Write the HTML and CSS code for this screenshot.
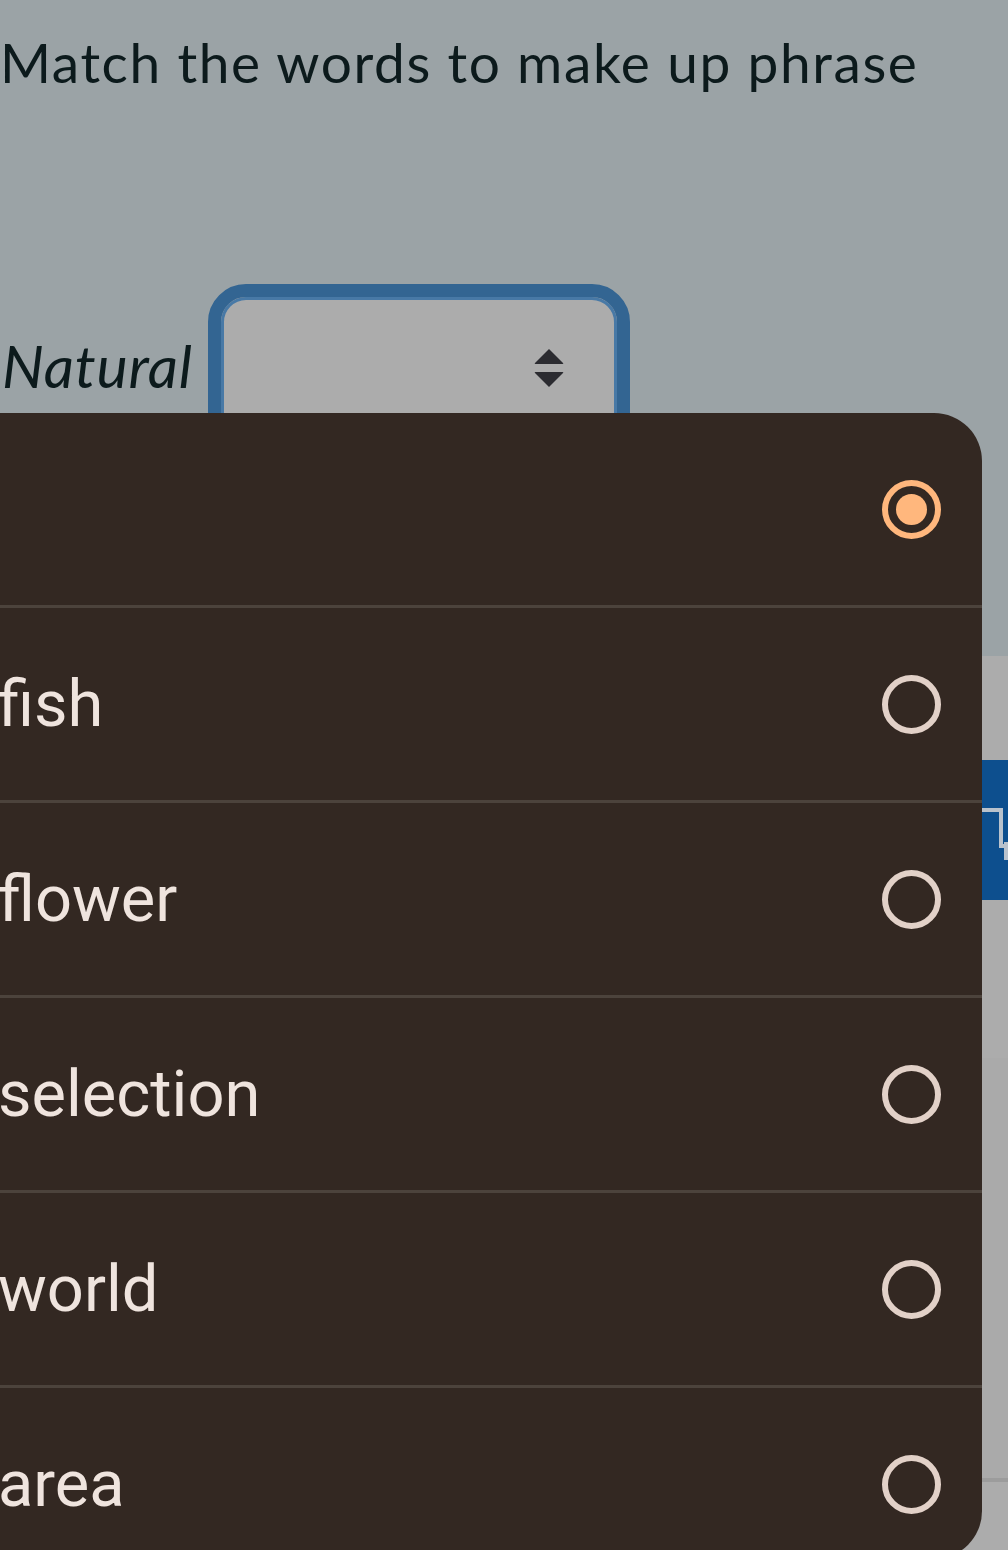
FILE: index.html
```html
<!DOCTYPE html>
<html>
<head>
<meta charset="utf-8">
<link rel="stylesheet" href="styles.css">
</head>
<body>
<main class="page">
  <h1 class="title">Match the words to make up phrase</h1>
  <div class="field">
    <span class="label">Natural</span>
    <div class="select">
      <svg class="updown" width="34" height="42" viewBox="0 0 34 42">
        <path d="M17 2 L31 16 Q32 17 30.5 17 L3.5 17 Q2 17 3 16 Z" fill="#2b2b30"/>
        <path d="M17 40 L31 26 Q32 25 30.5 25 L3.5 25 Q2 25 3 26 Z" fill="#2b2b30"/>
      </svg>
    </div>
  </div>
  <section class="sheet">
    <div class="sheet-top"></div>
    <div class="band">
      <svg class="copy" width="30" height="56" viewBox="0 0 30 56">
        <path d="M0 6 H19 V42 H26" fill="none" stroke="#b9c2cc" stroke-width="4"/>
        <path d="M24 38 V56" fill="none" stroke="#b9c2cc" stroke-width="4"/>
      </svg>
    </div>
    <div class="sheet-mid"></div>
    <div class="sheet-low"></div>
    <div class="sheet-foot"></div>
  </section>
</main>

<div class="menu">
  <div class="opt">
    <span class="opt-text"></span>
    <span class="radio on"><span class="dot"></span></span>
  </div>
  <div class="opt">
    <span class="opt-text">fish</span>
    <span class="radio"></span>
  </div>
  <div class="opt">
    <span class="opt-text">flower</span>
    <span class="radio"></span>
  </div>
  <div class="opt">
    <span class="opt-text">selection</span>
    <span class="radio"></span>
  </div>
  <div class="opt">
    <span class="opt-text">world</span>
    <span class="radio"></span>
  </div>
  <div class="opt">
    <span class="opt-text">area</span>
    <span class="radio"></span>
  </div>
</div>
</body>
</html>
```
FILE: styles.css
```css
html, body {
  margin: 0;
  padding: 0;
  height: 1550px;
  overflow: hidden;
  background: #9ba3a6;
}

.page {
  position: relative;
  height: 1550px;
}

.title {
  margin: 0;
  padding-top: 30px;
  font-family: Lato, "Noto Sans", sans-serif;
  font-weight: 400;
  font-size: 55px;
  line-height: 64px;
  color: #0c1a1c;
  letter-spacing: 1.6px;
}

.field {
  display: flex;
  align-items: flex-start;
  gap: 15px;
  margin-top: 190px;
}

.label {
  font-family: Lato, "Noto Sans", sans-serif;
  font-style: italic;
  font-size: 59px;
  line-height: 64px;
  color: #0c1a1c;
  padding-top: 50px;
  padding-left: 2px;
  letter-spacing: 0.8px;
}

.select {
  box-sizing: border-box;
  width: 422px;
  height: 170px;
  border: 13px solid #336592;
  border-radius: 38px;
  background: #acacac;
  box-shadow: inset 0 0 0 3px #4879a6;
  display: flex;
  justify-content: flex-end;
  align-items: flex-start;
  padding: 50px 51px 0 0;
}

.sheet {
  margin-top: 202px;
  display: flex;
  flex-direction: column;
}

.sheet-top {
  height: 104px;
  background: #acacac;
}

.band {
  height: 140px;
  background: #0d4f8e;
  display: flex;
  justify-content: flex-end;
  align-items: flex-start;
  padding-top: 44px;
  box-sizing: border-box;
}

.copy {
  margin-right: -4px;
}

.sheet-mid {
  height: 158px;
  background: #acacac;
}

.sheet-low {
  height: 420px;
  background: #aaaaaa;
  border-bottom: 4px solid #9c9c9c;
}

.sheet-foot {
  height: 80px;
  background: #acacac;
}

.menu {
  position: absolute;
  left: -60px;
  top: 413px;
  width: 1042px;
  height: 1146px;
  background: #332822;
  border-radius: 48px;
  overflow: hidden;
  display: flex;
  flex-direction: column;
}

.opt {
  height: 192px;
  flex: none;
  display: flex;
  align-items: center;
  justify-content: space-between;
  padding: 0 41px 0 58px;
  border-top: 3px solid #4c433c;
}

.opt:first-child {
  border-top: none;
}

.opt-text {
  font-family: Roboto, "Noto Sans", sans-serif;
  font-size: 65px;
  color: #efe4de;
  letter-spacing: 0;
}

.radio {
  box-sizing: border-box;
  width: 59px;
  height: 59px;
  border-radius: 50%;
  border: 6px solid #e2d1c8;
  display: flex;
  align-items: center;
  justify-content: center;
}

.radio.on {
  border-color: #ffb77d;
}

.dot {
  width: 31px;
  height: 31px;
  border-radius: 50%;
  background: #ffb77d;
}
```
